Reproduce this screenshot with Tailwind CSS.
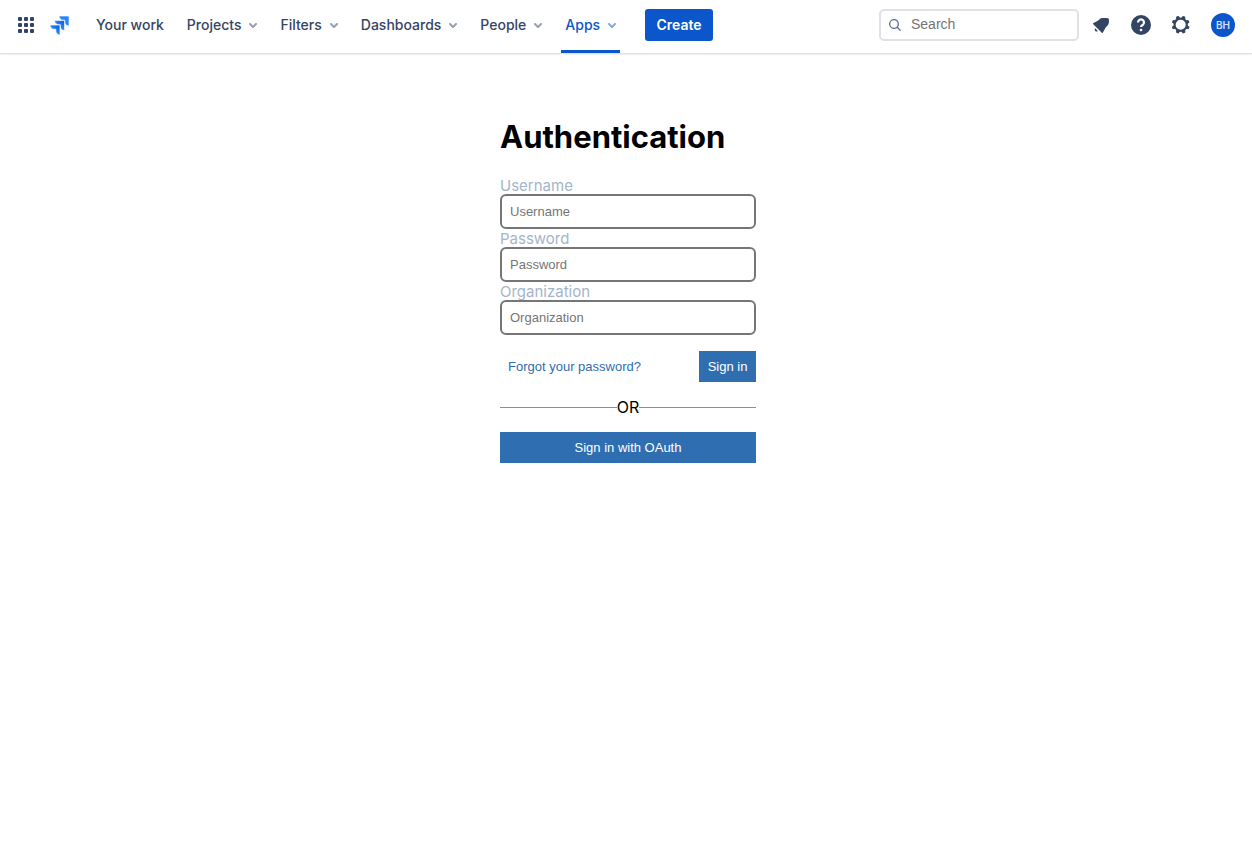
<!DOCTYPE html>
<html lang="en">
<head>
<meta charset="utf-8">
<meta name="viewport" content="width=device-width, initial-scale=1">
<title>Authentication</title>
<script src="https://cdn.jsdelivr.net/npm/@tailwindcss/browser@4"></script>
</head>
<body class="bg-white font-['Inter',sans-serif] text-black">
<svg class="hidden" aria-hidden="true">
  <symbol id="chevron" viewBox="0 0 24 24"><path fill="currentColor" d="M8.292 10.293a1.009 1.009 0 000 1.419l2.939 2.965c.218.215.5.322.779.322s.556-.107.769-.322l2.93-2.955a1.01 1.01 0 000-1.419.987.987 0 00-1.406 0l-2.298 2.317-2.307-2.327a.99.99 0 00-1.406 0z"/></symbol>
</svg>
<header class="flex h-[53px] items-stretch justify-between pl-3.5 pr-[17px] text-[#344563] shadow-[0_1px_1px_#dfe1e6,0_2px_2px_#f1f2f5]">
  <div class="flex items-stretch">
    <button type="button" aria-label="Switch to" class="flex w-6 items-center justify-center pb-[3px]">
      <svg class="size-6" viewBox="0 0 24 24" fill="currentColor">
        <rect x="4" y="4" width="4" height="4" rx="1"/><rect x="10" y="4" width="4" height="4" rx="1"/><rect x="16" y="4" width="4" height="4" rx="1"/>
        <rect x="4" y="10" width="4" height="4" rx="1"/><rect x="10" y="10" width="4" height="4" rx="1"/><rect x="16" y="10" width="4" height="4" rx="1"/>
        <rect x="4" y="16" width="4" height="4" rx="1"/><rect x="10" y="16" width="4" height="4" rx="1"/><rect x="16" y="16" width="4" height="4" rx="1"/>
      </svg>
    </button>
    <a href="#" aria-label="Jira" class="ml-3 flex items-center pb-0.5">
      <svg class="size-[19px]" viewBox="0 0 24 24">
        <defs>
          <linearGradient id="g1" x1="0.95" y1="0.02" x2="0.5" y2="0.5"><stop offset="0.1" stop-color="#0a5bd6"/><stop offset="1" stop-color="#2684ff"/></linearGradient>
        </defs>
        <g stroke="#fff" stroke-width="0.8">
        <path fill="#2684ff" d="M23.013 0H11.455a5.215 5.215 0 0 0 5.215 5.215h2.129v2.057A5.215 5.215 0 0 0 24 12.483V1.005A1.001 1.001 0 0 0 23.013 0Z"/>
        <path fill="url(#g1)" d="M17.294 5.757H5.736a5.215 5.215 0 0 0 5.215 5.214h2.129v2.058a5.218 5.218 0 0 0 5.215 5.214V6.758a1.001 1.001 0 0 0-1.001-1.001z"/>
        <path fill="url(#g1)" d="M11.571 11.513H0a5.218 5.218 0 0 0 5.232 5.215h2.13v2.057A5.215 5.215 0 0 0 12.575 24V12.518a1.005 1.005 0 0 0-1.005-1.005z"/>
        </g>
      </svg>
    </a>
    <nav class="ml-[23px] flex items-stretch gap-[15px] text-sm font-medium" aria-label="Primary">
      <a href="#" class="flex items-center border-b-3 border-transparent px-1">Your work</a>
      <button type="button" class="flex items-center border-b-3 border-transparent pl-1">Projects<svg class="-mr-1 size-6 opacity-50"><use href="#chevron"/></svg></button>
      <button type="button" class="flex items-center border-b-3 border-transparent pl-1">Filters<svg class="-mr-1 size-6 opacity-50"><use href="#chevron"/></svg></button>
      <button type="button" class="flex items-center border-b-3 border-transparent pl-1">Dashboards<svg class="-mr-1 size-6 opacity-50"><use href="#chevron"/></svg></button>
      <button type="button" class="flex items-center border-b-3 border-transparent pl-1">People<svg class="-mr-1 size-6 opacity-50"><use href="#chevron"/></svg></button>
      <button type="button" class="flex items-center border-b-3 border-[#0c56cc] pl-1 text-[#0c56cc]">Apps<svg class="-mr-1 size-6 opacity-50"><use href="#chevron"/></svg></button>
    </nav>
    <div class="ml-[25px] flex items-center pb-[3px]">
      <button type="button" class="h-8 w-17 rounded-[3px] bg-[#0c56cc] text-sm font-semibold text-white">Create</button>
    </div>
  </div>
  <div class="flex items-center pb-[3px]">
    <label class="flex h-8 w-[200px] items-center gap-2 rounded-[5px] border-2 border-[#dfe1e6] pl-1.5">
      <svg class="size-4 shrink-0 text-[#5e6f8d]" viewBox="0 0 24 24" fill="currentColor"><path fill-rule="evenodd" d="M16.436 15.085l3.94 4.01a1 1 0 01-1.425 1.402l-3.938-4.006a7.5 7.5 0 111.423-1.406zM10.5 16a5.5 5.5 0 100-11 5.5 5.5 0 000 11z"/></svg>
      <input type="search" aria-label="Search" placeholder="Search" class="w-full min-w-0 pb-0.5 font-['Liberation_Sans',sans-serif] text-sm outline-none placeholder:text-[#757575]">
    </label>
    <div class="ml-2.5 flex items-center gap-4">
      <button type="button" aria-label="Notifications"><svg class="size-6" viewBox="0 0 24 24" fill="currentColor"><path d="M6.200 17.900a2 2 0 002.600 0l-2.600-2.600a2 2 0 000 2.600zm5.182-12.422l-.725.725c-.782.782-2.21 1.813-3.206 2.311l-3.017 1.509c-.495.248-.584.774-.187 1.171l8.556 8.556c.398.396.922.313 1.171-.188l1.51-3.016c.494-.988 1.526-2.42 2.311-3.206l.725-.726c1.300-1.300 1.600-3.600 1.400-6.200a1.300 1.300 0 00-1.200-1.200c-2.700-.2-5.900-.1-7.338.264z"/></svg></button>
      <button type="button" aria-label="Help"><svg class="size-6" viewBox="0 0 24 24"><circle cx="12" cy="12" r="10" fill="currentColor"/><path d="M9 9.500a3 3 0 1 1 4.600 2.500C12.500 12.700 12 13 12 14" fill="none" stroke="#fff" stroke-width="2.200"/><circle cx="12" cy="17" r="1.300" fill="#fff"/></svg></button>
      <button type="button" aria-label="Settings"><svg class="size-6" viewBox="0 0 24 24" fill="currentColor"><path fill-rule="evenodd" d="M11.701 16.7a5.002 5.002 0 110-10.003 5.002 5.002 0 010 10.004m8.368-3.117a1.995 1.995 0 01-1.346-1.885c0-.876.563-1.613 1.345-1.885a.48.48 0 00.315-.574 8.947 8.947 0 00-.836-1.993.477.477 0 00-.598-.195 2.04 2.04 0 01-1.29.08 1.988 1.988 0 01-1.404-1.395 2.04 2.04 0 01.076-1.297.478.478 0 00-.196-.597 8.98 8.98 0 00-1.975-.826.479.479 0 00-.574.314 1.995 1.995 0 01-1.885 1.346 1.994 1.994 0 01-1.884-1.345.482.482 0 00-.575-.315c-.708.2-1.379.485-2.004.842a.47.47 0 00-.198.582A2.002 2.002 0 014.445 7.06a.478.478 0 00-.595.196 8.946 8.946 0 00-.833 1.994.48.48 0 00.308.572 1.995 1.995 0 011.323 1.877c0 .867-.552 1.599-1.324 1.877a.479.479 0 00-.308.57 8.99 8.99 0 00.723 1.79.477.477 0 00.624.194c.595-.273 1.343-.264 2.104.238.117.077.225.185.302.3.527.8.512 1.58.198 2.188a.473.473 0 00.168.628 8.946 8.946 0 002.11.897.474.474 0 00.57-.313 1.995 1.995 0 011.886-1.353c.878 0 1.618.567 1.887 1.353a.475.475 0 00.57.313 8.964 8.964 0 002.084-.883.473.473 0 00.167-.631c-.318-.608-.337-1.393.191-2.195.077-.116.185-.225.302-.302.772-.511 1.527-.513 2.125-.23a.477.477 0 00.628-.19 8.925 8.925 0 00.728-1.793.478.478 0 00-.314-.573"/></svg></button>
    </div>
    <button type="button" aria-label="Your profile" class="ml-[18px] flex size-6 items-center justify-center rounded-full bg-[#0c56cc] text-[10px] font-semibold text-[#d3e0f5]">BH</button>
  </div>
</header>
<main class="flex justify-center pl-1 pt-16">
  <form class="w-64">
    <h1 class="mb-[19px] text-[31px] leading-10 font-bold">Authentication</h1>
    <div class="leading-4">
      <label for="username" class="block pt-0.5 text-[15px] leading-4 text-[#a5b4ca]">Username</label>
      <input id="username" type="text" placeholder="Username" class="block h-[35px] w-full rounded-[6px] border-2 border-[#767676] px-2 font-['Liberation_Sans',sans-serif] text-[13px] placeholder:text-[#757575]">
      <label for="password" class="block pt-0.5 text-[15px] leading-4 text-[#a5b4ca]">Password</label>
      <input id="password" type="password" placeholder="Password" class="block h-[35px] w-full rounded-[6px] border-2 border-[#767676] px-2 font-['Liberation_Sans',sans-serif] text-[13px] placeholder:text-[#757575]">
      <label for="organization" class="block pt-0.5 text-[15px] leading-4 text-[#a5b4ca]">Organization</label>
      <input id="organization" type="text" placeholder="Organization" class="block h-[35px] w-full rounded-[6px] border-2 border-[#767676] px-2 font-['Liberation_Sans',sans-serif] text-[13px] placeholder:text-[#757575]">
    </div>
    <div class="mt-4 flex justify-between font-['Liberation_Sans',sans-serif] text-[13px]">
      <button type="button" class="h-[31px] px-2 text-[#2f6eb0]">Forgot your password?</button>
      <button type="submit" class="h-[31px] w-[57px] bg-[#2f6eb0] text-white">Sign in</button>
    </div>
    <div class="mt-4 mb-4 flex items-center leading-[18px]">
      <hr class="flex-1 border-[#8e8e8e]"><span>OR</span><hr class="flex-1 border-[#8e8e8e]">
    </div>
    <button type="button" class="h-[31px] w-full bg-[#2f6eb0] font-['Liberation_Sans',sans-serif] text-[13px] text-white">Sign in with OAuth</button>
  </form>
</main>
</body>
</html>
